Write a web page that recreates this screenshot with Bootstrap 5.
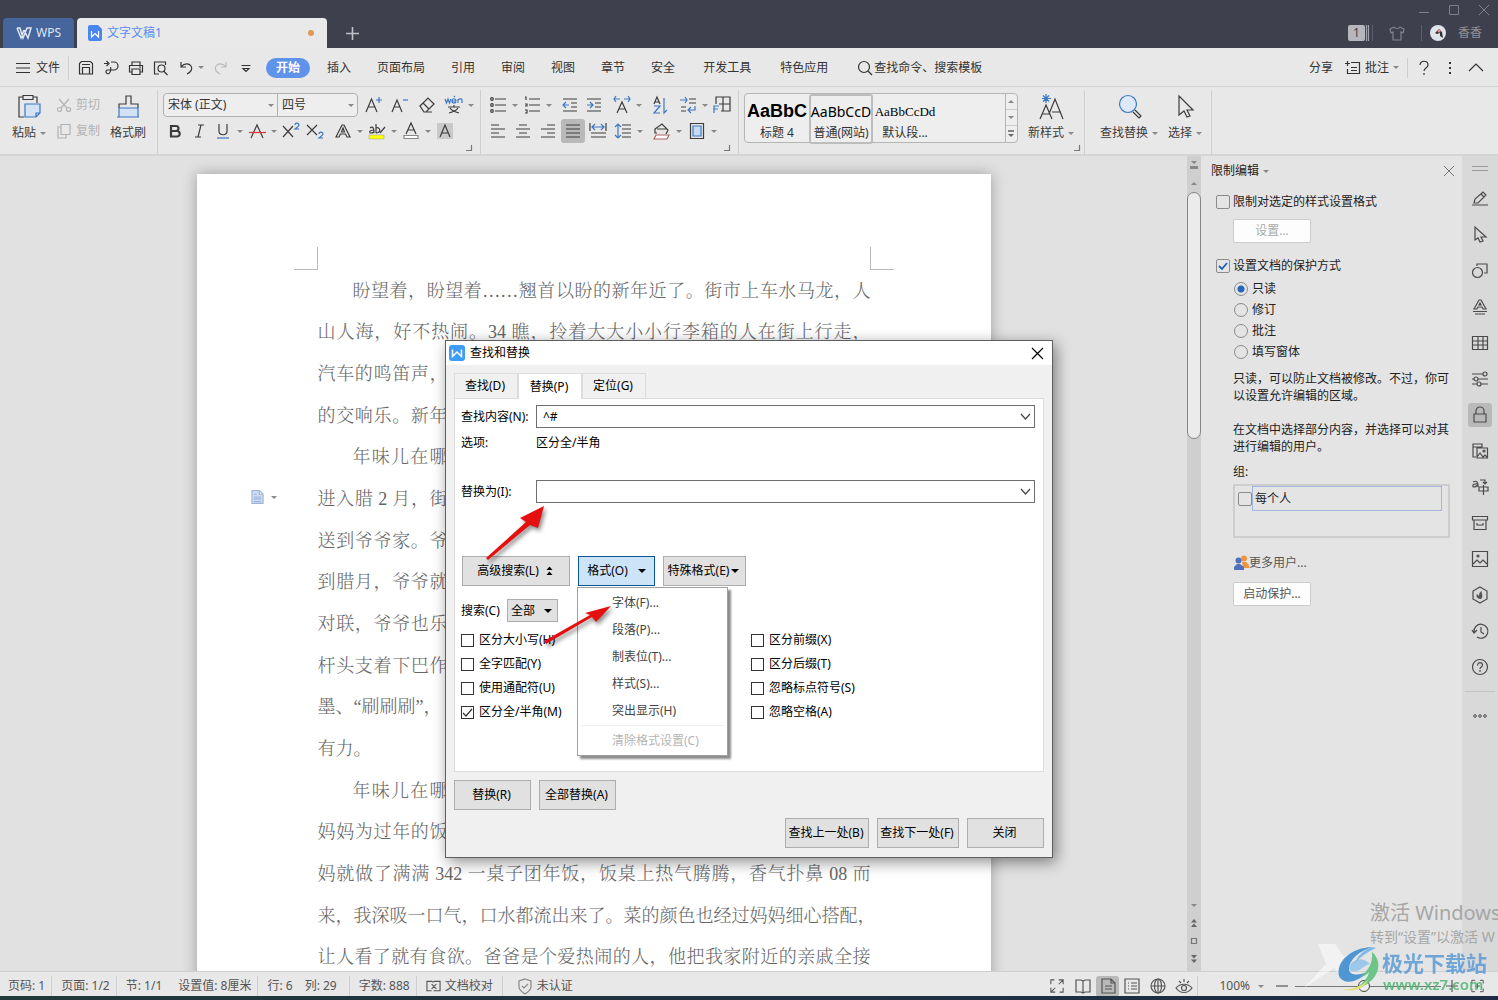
<!DOCTYPE html>
<html lang="zh-CN">
<head>
<meta charset="utf-8">
<meta name="viewport" content="width=device-width, initial-scale=1">
<title>文字文稿1 - WPS</title>
<link rel="stylesheet" href="https://cdn.jsdelivr.net/npm/bootstrap@5.3.0/dist/css/bootstrap.min.css">
<style>
body{font:12px/18px "Noto Sans","Noto Sans CJK SC",sans-serif;color:#333;background:#e8e8e8;height:100vh;overflow:hidden}
svg{fill:none;stroke:currentColor;stroke-width:1.2;width:16px;height:16px;flex:none;overflow:visible}
.thin{stroke-width:1}
.blu{stroke:#3c78c3}
.tbtn{border:0;background:none;padding:0;color:inherit;display:flex;align-items:center;justify-content:center;white-space:nowrap;text-decoration:none;flex:none}
.caret{width:0;height:0;border:3px solid transparent;border-top-color:#888;border-bottom:0;flex:none}
.caret.dark{border-width:4px 4px 0;border-top-color:#000}
.sep{width:1px;background:#cfcfcf;flex:none}
/* title bar */
.titlebar{height:48px;background:#3e414d;color:#a0a3ad}
.tabstrip{gap:3px;padding-left:3px}
.home{width:71px;height:30px;background:#46659c;color:#dfe6f3;border-radius:4px 4px 0 0;gap:4px}
.doctab{width:250px;height:30px;background:#e9e9e9;color:#5b8def;border-radius:4px 4px 0 0;padding:0 13px 0 11px;gap:5px}
.doctab svg{width:14px}
.dot{width:6px;height:6px;border-radius:50%;background:#dd9a55}
.winbtns{height:18px;gap:14px;padding-right:6px;color:#7d808b}
.account{height:30px;padding-right:16px}
.num{width:17px;height:16px;line-height:16px;background:#b5b7bc;color:#3e414d;border-radius:2px}
/* menu row */
.menurow{height:39px;border-bottom:1px solid #d2d2d2;padding:1px 14px 0}
.qat .tbtn{width:25px;height:24px}
.pill{width:44px;height:20px;border-radius:10px;background:#5f92ea;color:#fff;font-weight:700}
.mtabs{gap:26px;padding-left:17px}
/* ribbon */
.ribbon{height:69px;border-bottom:2px solid #d4d4d4;color:#3c3c3c}
.ribbon>.sep{height:64px;margin-top:3px}
.row26{height:26px;display:flex;align-items:center}
.cell{width:24px;height:24px}
.cell svg,.dd svg{width:18px;height:18px}
.dd{width:34px;height:24px;justify-content:flex-start;padding-left:3px;gap:5px}
.fontbox{border:1px solid #b0b0b0;border-radius:4px;height:24px;background:#eee;overflow:hidden}
.fontbox select{appearance:none;border:0;background:transparent url("data:image/svg+xml,%3Csvg xmlns='http://www.w3.org/2000/svg' viewBox='0 0 6 3'%3E%3Cpath d='M0 0h6L3 3z' fill='%23888'/%3E%3C/svg%3E") no-repeat right 3px center/6px 3px;padding:0 4px;color:#333;font:inherit;height:22px}
.fontbox select:first-child{width:114px;border-right:1px solid #b0b0b0}
.fontbox select:last-child{width:79px}
.big{flex-direction:column;gap:4px;height:46px}
.big svg{width:26px;height:26px}
.big .lbl{display:flex;align-items:center;gap:4px}
.dim{color:#b3b3b3;margin-top:-3px}
.on{background:#b9b9b9;border-radius:3px}
.gallery{width:274px;height:50px;border:1px solid #b5b5b5;border-radius:4px;background:#eee}
.stylei{width:64px;height:50px;flex-direction:column;color:#333;border:2px solid transparent;border-radius:3px;padding-top:1px}
.stylei span{height:26px;line-height:28px;color:#000}
.stylei.sel{border-color:#bdbdbd}
.stylei .s1{font:bold 18px/26px "Liberation Sans",sans-serif}
.stylei .s2{font-size:14px}
.stylei .s3{font:13px/28px "Liberation Serif",serif}
.galbtn{width:12px;border-left:1px solid #b5b5b5}
.galbtn .tbtn{height:16px;border-bottom:1px solid #ccc}
.up{transform:rotate(180deg)}
.corner{color:#777;align-self:flex-end;margin:0 0 3px -10px}
.corner svg{width:6px;height:6px;display:block}
/* workspace */
.deskarea{background:#e1e1e1;overflow:hidden}
.sheet{width:794px;margin-top:18px;padding:73px 97px 0;background:#fff;box-shadow:0 0 14px rgba(0,0,0,.3);height:900px}
.mark-c{width:24px;height:23px;border:0 solid #b9b9b9;border-bottom-width:1px}
.mark-c.lft{border-right-width:1px}
.mark-c.rgt{border-left-width:1px}
.manus{padding:0 23px 0 24px;height:708px;display:grid;grid-template-columns:minmax(0,1fr);grid-auto-rows:1fr;align-items:center;font:300 18px/24px "Liberation Serif","Noto Serif CJK SC","Noto Sans CJK SC",serif;color:#666;white-space:nowrap}
.manus p{margin:0;text-align:justify;text-align-last:justify}
.manus .part{width:130px}
.manus .ind{padding-left:35px}
.manus .tail{text-align-last:left}
.opts{left:54px;top:315px;gap:7px;color:#9bb3d9}
.vscroll{width:14px;background:#cfcfcf;color:#777}
.thumb{height:247px;border:1px solid #868686;border-radius:7px;background:#ebebeb}
.vscroll .tbtn{height:18px}
.pane{width:261px;background:#e4e4e4;padding:6px 12px 0 10px;color:#222}
.pane label{display:flex;align-items:center;gap:3px}
.pane input{appearance:none;width:14px;height:14px;border:1px solid #8b8b8b;margin:0;background:transparent center/10px no-repeat;border-radius:2px;flex:none}
.pane input[type=checkbox]:checked{background-image:url("data:image/svg+xml,%3Csvg xmlns='http://www.w3.org/2000/svg' viewBox='0 0 10 10'%3E%3Cpath d='M1 5l3 3 5-6' fill='none' stroke='%231f5fb4' stroke-width='1.8'/%3E%3C/svg%3E")}
.pane input[type=radio]{border-radius:50%}
.pane input[type=radio]:checked{background:radial-gradient(circle,#2465bd 0 3px,transparent 4px)}
.pane .radios label{height:21px;gap:4px}
.pbtn{width:78px;height:24px;background:#fdfdfd;border:1px solid #ccc;border-radius:2px;color:#555}
.inset{padding-left:22px}
.pane p{line-height:17px;margin:0 0 17px}
.users{height:54px;border:2px solid #cdcdcd;padding:0 3px;margin-top:3px}
.users .who{border:1px solid #a0b6de;width:190px;height:25px;line-height:23px;padding-left:2px}
.rail{width:36px;background:#d9d9d9;color:#4a4a4a}
.rail .tbtn{width:24px;height:24px;margin-bottom:12px}
/* status */
.status{height:25px;border-top:1px solid #cfcfcf;color:#555;padding:4px 0 0 8px}
.status .sep{height:20px;margin:0 9px}
.status .tbtn{width:26px;height:21px}
.status .tbtn.on{width:23px}
.strip{height:4px;background:linear-gradient(90deg,#22383c,#1d2b44)}
.zoomr{appearance:none;width:146px;height:14px;background:linear-gradient(#777,#777) center/100% 1px no-repeat;margin:0 3px}
.zoomr::-webkit-slider-thumb{appearance:none;width:12px;height:12px;border:1px solid #444;border-radius:50%;background:#eee}
/* dialog */
.dlg{left:445px;top:340px;width:608px;height:518px;background:#f0f0f0;border:1px solid #5e5e5e;color:#000;box-shadow:3px 4px 14px rgba(0,0,0,.45)}
.dlg-t{height:24px;background:#fff;padding:0 9px 0 3px;gap:5px}
.dtabs{padding:8px 8px 0;align-items:flex-end}
.dtabs button{width:64px;height:25px;border:1px solid #dcdcdc;border-bottom:0;background:#f0f0f0;padding:0 6px 0 4px}
.dtabs .cur{height:26px;background:#fff;margin-bottom:-1px;z-index:1;position:relative}
.dbody{margin:0 8px;height:374px;width:590px;border:1px solid #dcdcdc;background:#fff;padding:6px}
.fld{display:flex;align-items:center}
.fld>label{width:75px}
.combo{height:23px;border:1px solid #6f6f6f;display:flex;align-items:center;width:499px;background:#fff}
.combo input{border:0;outline:0;flex:1;padding:0 6px;height:20px;font:inherit;min-width:0}
.combo .tbtn{width:17px;height:20px;color:#444}
.combo svg{width:9px;height:6px}
.dbtn{border:1px solid #adadad;background:#e1e1e1;height:30px;width:77px;display:flex;align-items:center;justify-content:center;gap:7px;padding:0 2px 0 0;color:#000;white-space:nowrap}
.dbtn.hot{background:#cce4f7;border:1px solid #0a5596;gap:10px;padding:0}
.seldir{appearance:none;border:1px solid #adadad;width:51px;height:23px;color:#000;font:inherit;padding:0 3px;background:#e1e1e1 url("data:image/svg+xml,%3Csvg xmlns='http://www.w3.org/2000/svg' viewBox='0 0 8 4'%3E%3Cpath d='M0 0h8L4 4z'/%3E%3C/svg%3E") no-repeat right 5px center/8px 4px}
.chk label{display:flex;align-items:center;gap:5px;height:24px}
.chk input{appearance:none;margin:0;width:13px;height:13px;border:1px solid #333;background:#fff center/11px no-repeat}
.chk input:checked{background-image:url("data:image/svg+xml,%3Csvg xmlns='http://www.w3.org/2000/svg' viewBox='0 0 11 11'%3E%3Cpath d='M1 6l3 3 6-7' fill='none' stroke='%23333' stroke-width='1.2'/%3E%3C/svg%3E")}
.popm{left:131px;top:246px;width:151px;height:169px;background:#fff;border:1px solid #a0a0a0;box-shadow:3px 3px 2px rgba(0,0,0,.45);padding:1px 0 0;color:#444}
.popm button{display:block;border:0;background:none;color:inherit;padding:0 0 0 34px;height:27px;text-align:left;width:100%}
.popm hr{margin:1px 3px;border-color:#bbb}
.popm .off{color:#b5b5b5}
.arrows{left:0;top:0;width:300px;height:400px;fill:#e60f0f;stroke:none;pointer-events:none;filter:drop-shadow(2px 3px 2px rgba(0,0,0,.45))}
/* overlays */
.activ{left:1370px;right:0;top:898px;overflow:hidden;white-space:nowrap;color:#a6a6a6}
.activ .l1{font-size:20px;line-height:30px}
.activ .l2{font-size:14px;line-height:18px}
.brand{left:1300px;top:938px;width:198px;height:56px;pointer-events:none}
.brand svg{width:198px;height:56px;stroke:none}
.bname{left:82px;top:12px;font:bold 21px/24px "Noto Sans CJK SC",sans-serif;color:#5b9bd5;opacity:.85}
.burl{left:83px;top:38px;font:600 15px/16px "Noto Sans",sans-serif;color:#4fb573;opacity:.85}
</style>
<script src="https://cdn.jsdelivr.net/npm/bootstrap@5.3.0/dist/js/bootstrap.bundle.min.js"></script>
</head>
<body class="d-flex flex-column position-relative">

<header class="titlebar d-flex justify-content-between flex-shrink-0">
  <div class="tabstrip d-flex align-items-end">
    <button class="tbtn home"><svg viewBox="0 0 16 16"><path stroke-width="1.500" d="M1 3h3l3 10 4-10h4L12 13 8 5M1 3l4 10 3-8"/></svg>WPS</button>
    <div class="doctab d-flex align-items-center"><svg viewBox="0 0 14 16"><path d="M2 0h8l4 4v10a2 2 0 0 1-2 2H2a2 2 0 0 1-2-2V2a2 2 0 0 1 2-2z" fill="#4a86f0" stroke="none"/><path d="M3.500 6v6l3.500-3.500 3.500 3.500V6" stroke="#fff"/></svg><span class="flex-fill">文字文稿1</span><span class="dot"></span></div>
    <button class="tbtn ms-3 mb-2" aria-label="新建"><svg style="width:13px;height:13px" viewBox="0 0 12 12"><path d="M6 0v12M0 6h12" stroke="#c0c2c9" stroke-width="1.500"/></svg></button>
  </div>
  <div>
    <div class="winbtns d-flex justify-content-end align-items-center">
      <svg class="thin" viewBox="0 0 16 16"><path d="M3 11.500h10"/></svg><svg class="thin" viewBox="0 0 16 16"><path d="M3.500 4.500h9v9h-9z"/></svg><svg class="thin" viewBox="0 0 16 16"><path d="M3 4l10 10M13 4L3 14"/></svg>
    </div>
    <div class="account d-flex align-items-center">
      <span class="num text-center">1</span><svg style="width:7px" viewBox="0 0 7 16"><path d="M1.500 0v16M3.500 0v16"/></svg><span class="sep" style="height:16px;background:#5d606b"></span>
      <svg class="mx-3" viewBox="0 0 16 16"><path d="M5 2L1 4l1 4 2-1v8h8V7l2 1 1-4-4-2c-1 2-5 2-6 0z" stroke="#82858f"/></svg>
      <span class="sep me-2" style="height:16px;background:#5d606b"></span>
      <svg viewBox="0 0 16 16"><circle cx="8" cy="8" r="8" fill="#dfe3ea" stroke="none"/><path d="M5 8l4-4 3 3 1 6-3-2V8L7 9z" fill="#333" stroke="none"/><circle cx="9" cy="6" r="1.500" fill="#e88" stroke="none"/></svg>
      <span class="ms-2 ps-1" style="color:#8e919b">香香</span>
    </div>
  </div>
</header>

<nav class="menurow d-flex align-items-center flex-shrink-0">
  <button class="tbtn gap-1"><svg style="width:18px" viewBox="0 0 18 16"><path d="M2 3.500h14M2 8h14M2 12.500h14"/></svg>文件</button>
  <span class="sep ms-2 me-1" style="height:24px"></span>
  <div class="qat d-flex">
    <button class="tbtn" aria-label="保存"><svg viewBox="0 0 16 16"><path d="M1.500 3.500L3.500 1.500h9l2 2V14h-13V3.500zM4.500 14V7.500h7V14M4 4.500h8"/></svg></button>
    <button class="tbtn" aria-label="输出"><svg viewBox="0 0 16 16"><path d="M1 3.500h4M3.500 1l2.500 2.500L3.500 6M8 2h3a4 4 0 0 1 0 8H4a2 2 0 1 0 2 3.500c2-1.500 2-5 1.500-6.500"/></svg></button>
    <button class="tbtn" aria-label="打印"><svg viewBox="0 0 16 16"><path d="M4 5V2h8v3M4 12H1.500V5.500h13V12H12M4 9h8v5.500H4zM11 7h2"/></svg></button>
    <button class="tbtn" aria-label="预览"><svg viewBox="0 0 16 16"><path d="M6 14H1.500V2h11v3M10.500 11l4 4"/><circle cx="8.500" cy="8.500" r="3.500"/></svg></button>
    <button class="tbtn" aria-label="撤销"><svg viewBox="0 0 16 16"><path d="M3 2v5h5M3 7c3-4 8-4 10-1s0 6-4 8"/></svg></button>
    <span class="caret align-self-center"></span>
    <button class="tbtn ms-1" aria-label="恢复"><svg viewBox="0 0 16 16"><path d="M13 2v5H8M13 7C10 3 5 3 3 6s0 6 4 8" stroke="#bbb"/></svg></button>
    <button class="tbtn" aria-label="自定义"><svg viewBox="0 0 16 16"><path d="M3.500 5.500h9M5 8.500l3 3 3-3z"/></svg></button>
  </div>
  <button class="tbtn pill ms-2">开始</button>
  <div class="mtabs d-flex">
    <a class="tbtn" href="#">插入</a><a class="tbtn" href="#">页面布局</a><a class="tbtn" href="#">引用</a><a class="tbtn" href="#">审阅</a><a class="tbtn" href="#">视图</a><a class="tbtn" href="#">章节</a><a class="tbtn" href="#">安全</a><a class="tbtn" style="padding-left:2px" href="#">开发工具</a><a class="tbtn" style="padding-left:3px" href="#">特色应用</a>
    <button class="tbtn ps-1"><svg viewBox="0 0 16 16"><circle cx="6" cy="7" r="5.500"/><path d="M10 11l4 4"/></svg>查找命令、搜索模板</button>
  </div>
  <div class="ms-auto d-flex align-items-center">
    <button class="tbtn me-2">分享</button>
    <button class="tbtn"><svg class="mx-1" viewBox="0 0 16 16"><path d="M6 2.500h8.500v11h-12V9M0 3.500h5M2.500 1v5M6 7.500h6M6 10.500h6"/></svg>批注<span class="caret ms-1"></span></button>
    <span class="sep ms-2 me-2" style="height:20px"></span>
    <button class="tbtn" aria-label="帮助"><svg viewBox="0 0 16 16"><path d="M4 5c0-5 8-5 8 0 0 3-4 3-4 6M8 13v2"/></svg></button>
    <button class="tbtn mx-2 px-1" aria-label="更多"><svg style="width:12px" viewBox="0 0 12 16"><path d="M6 2v2M6 7v2M6 12v2" stroke-width="2"/></svg></button>
    <button class="tbtn" aria-label="收起"><svg viewBox="0 0 16 16"><path d="M1 11l7-7 7 7"/></svg></button>
  </div>
</nav>

<section class="ribbon d-flex flex-shrink-0">
  <div class="d-flex pt-2" style="width:157px;padding-left:10px">
    <button class="tbtn big" style="width:38px"><svg viewBox="0 0 26 26"><path d="M7 3H3v20h5M17 3h4v6M7 1.500h10v4H7z"/><path class="blu" fill="#d3e3f5" d="M9 10h15v9l-4 4H9zM20 23v-4h4"/></svg><span class="lbl">粘贴<span class="caret"></span></span></button>
    <div class="dim ps-2">
      <button class="tbtn row26 gap-1"><svg viewBox="0 0 16 16"><circle cx="3.500" cy="12.500" r="2"/><circle cx="12.500" cy="12.500" r="2"/><path d="M3 2l8 9M13 2l-8 9"/></svg>剪切</button>
      <button class="tbtn row26 gap-1"><svg viewBox="0 0 16 16"><path d="M5 1.500h9v10H5zM5 4H2v11h8v-3.500"/></svg>复制</button>
    </div>
    <button class="tbtn big" style="margin-left:10px"><svg viewBox="0 0 26 26"><path d="M4 14v-4h7V2h5v8h7v4"/><path class="blu" fill="#d3e3f5" d="M4 14h19v9H4zM2 23h22"/></svg><span class="lbl">格式刷</span></button>
  </div>
  <span class="sep"></span>
  <div style="width:322px;padding:5px 0 0 5px" class="d-flex">
    <div>
      <div class="row26" style="gap:3px">
        <div class="fontbox d-flex"><select aria-label="字体"><option>宋体 (正文)</option></select><select aria-label="字号"><option>四号</option></select></div>
        <button class="tbtn cell" aria-label="增大字号"><svg viewBox="0 0 18 18"><path d="M2 16L7.500 3 13 16M4 11h7"/><path class="blu" d="M15 1v6M12 4h6"/></svg></button>
        <button class="tbtn cell" aria-label="减小字号"><svg viewBox="0 0 18 18"><path d="M1 16L6 4l5 12M3 11h6"/><path class="blu" d="M12 4h5"/></svg></button>
        <button class="tbtn cell" aria-label="清除格式"><svg viewBox="0 0 18 18"><path d="M2 10l8-8 6 6-8 8H6zM5 7l6 6M8 16h6"/></svg></button>
        <button class="tbtn dd" aria-label="拼音"><svg viewBox="0 0 18 18"><path class="blu" d="M0 3l1.500 4L3 3l1.500 4L6 3M7 5h4c0-3-4-3-4 0s3 2 4 1M9 1l1-1M13 7V3M13 4c2-2 4-1 4 0v3"/><path d="M3 11h12M9 9v2M5 12c2 3 5 4 9 5M13 12c-2 3-5 4-9 5"/></svg><span class="caret"></span></button>
      </div>
      <div class="row26">
        <button class="tbtn cell" aria-label="加粗"><svg viewBox="0 0 18 18"><path stroke-width="2.200" d="M5 4h5a2.500 2.500 0 0 1 0 5H5zM5 9h6a2.500 2.500 0 0 1 0 5.500H5z"/></svg></button>
        <button class="tbtn cell" aria-label="倾斜"><svg viewBox="0 0 18 18"><path d="M8 3h6M5 15h6M11 3L8 15"/></svg></button>
        <button class="tbtn dd" aria-label="下划线"><svg viewBox="0 0 18 18"><path d="M5 2v7c0 5 8 5 8 0V2"/><path class="blu" d="M3 16h12"/></svg><span class="caret"></span></button>
        <button class="tbtn dd" aria-label="删除线"><svg viewBox="0 0 18 18"><path d="M3 16L9 3l6 13"/><path stroke="#d33" d="M1 10.500h17"/></svg><span class="caret"></span></button>
        <button class="tbtn cell" aria-label="上标"><svg viewBox="0 0 18 18"><path d="M1 4l10 11M11 4L1 15"/><path class="blu" d="M13 3c0-3 4-2 4 0 0 1-4 4-4 4h4"/></svg></button>
        <button class="tbtn cell" aria-label="下标"><svg viewBox="0 0 18 18"><path d="M1 3l10 10M11 3L1 13"/><path class="blu" d="M13 12c0-3 4-2 4 0 0 1-4 4-4 4h4"/></svg></button>
        <button class="tbtn dd ms-1" aria-label="文字效果"><svg viewBox="0 0 18 18"><path d="M2 15L8 3h2l6 12h-3l-1.500-3h-5L5 15zM7.500 10L9 6l1.500 4z"/></svg><span class="caret"></span></button>
        <button class="tbtn dd" aria-label="突出显示"><svg viewBox="0 0 18 18"><path d="M2 6c3-2 4 0 4 5M6 8c-5 0-5 3-3 3s3-1 3-1M8 2v9M8 6c4-2 6 5 0 5M17 5l-5 6"/><path stroke="#999" fill="#ff0" stroke-width=".5" d="M1 13h15v4H1z"/></svg><span class="caret"></span></button>
        <button class="tbtn dd" aria-label="字体颜色"><svg viewBox="0 0 18 18"><path d="M4 12L9 1l5 11M6 8h6"/><path stroke="#888" fill="#fff" d="M2 13.500h14v3H2z"/></svg><span class="caret"></span></button>
        <button class="tbtn cell" aria-label="字符底纹"><svg viewBox="0 0 18 18"><path fill="#c9c9c9" stroke="none" d="M1 1h16v16H1z"/><path d="M4 15L9 3l5 12M6 11h6"/></svg></button>
      </div>
    </div>
    <span class="corner"><svg viewBox="0 0 6 6"><path d="M5.500 0v5.500H0"/></svg></span>
  </div>
  <span class="sep"></span>
  <div style="width:257px;padding:5px 0 0 5px" class="d-flex">
    <div>
      <div class="row26">
        <button class="tbtn dd" aria-label="项目符号"><svg viewBox="0 0 18 18"><circle cx="3" cy="3" r="1.300"/><circle cx="3" cy="9" r="1.300"/><circle cx="3" cy="15" r="1.300"/><path d="M6 3h11M6 9h11M6 15h11"/></svg><span class="caret"></span></button>
        <button class="tbtn dd" aria-label="编号"><svg viewBox="0 0 18 18"><path d="M2 1h1v3M2 8h2v2H2M2 14h2v3H2M6 3h11M6 9h11M6 15h11"/></svg><span class="caret"></span></button>
        <button class="tbtn cell ms-1" aria-label="减少缩进"><svg viewBox="0 0 18 18"><path d="M2 3h14M10 7h6M10 11h6M2 15h14"/><path class="blu" d="M8 9H2M5 6L2 9l3 3"/></svg></button>
        <button class="tbtn cell" aria-label="增加缩进"><svg viewBox="0 0 18 18"><path d="M2 3h14M10 7h6M10 11h6M2 15h14"/><path class="blu" d="M2 9h6M5 6l3 3-3 3"/></svg></button>
        <button class="tbtn dd ms-1" aria-label="中文版式"><svg viewBox="0 0 18 18"><path d="M4 17L9 6l5 11M6 13h6"/><path class="blu" d="M1 3h6M3 0L1 3l2 3M11 3h6M15 0l2 3-2 3"/></svg><span class="caret"></span></button>
        <button class="tbtn cell ms-1" aria-label="排序"><svg viewBox="0 0 18 18"><path d="M3 8l3-7 3 7M4 6h4"/><path class="blu" d="M3 10h6l-6 7h6M13 2v15l3-3"/></svg></button>
        <button class="tbtn dd ms-1" aria-label="换行"><svg viewBox="0 0 18 18"><path d="M10 3h7M10 7h7M2 11h5M2 15h5"/><path class="blu" d="M1 4h7M6 1l2 3-2 3M16 10v4h-6M12 11l-3 3 3 3"/></svg><span class="caret"></span></button>
        <button class="tbtn cell" aria-label="制表位"><svg viewBox="0 0 18 18"><path d="M3 8V1h14v14H8M10 1v14M6 8h11"/><path class="blu" d="M1 17v-7h5M1 13h4"/></svg></button>
      </div>
      <div class="row26" style="gap:1px">
        <button class="tbtn cell" aria-label="左对齐"><svg viewBox="0 0 18 18"><path d="M2 3h8M2 7h14M2 11h8M2 15h14"/></svg></button>
        <button class="tbtn cell" aria-label="居中"><svg viewBox="0 0 18 18"><path d="M5 3h8M2 7h14M5 11h8M2 15h14"/></svg></button>
        <button class="tbtn cell" aria-label="右对齐"><svg viewBox="0 0 18 18"><path d="M8 3h8M2 7h14M8 11h8M2 15h14"/></svg></button>
        <button class="tbtn cell on" aria-label="两端对齐"><svg viewBox="0 0 18 18"><path d="M2 3h14M2 7h14M2 11h14M2 15h14"/></svg></button>
        <button class="tbtn cell" aria-label="分散对齐"><svg viewBox="0 0 18 18"><path d="M1 1v8M17 1v8M2 11h15M2 15h15"/><path class="blu" d="M3 5h12M6 2L3 5l3 3M12 2l3 3-3 3"/></svg></button>
        <button class="tbtn dd" aria-label="行距"><svg viewBox="0 0 18 18"><path d="M8 3h9M8 7h9M8 11h9M8 15h9"/><path class="blu" d="M4 2v14M1 5l3-3 3 3M1 13l3 3 3-3"/></svg><span class="caret"></span></button>
        <button class="tbtn dd ms-1" aria-label="底纹"><svg viewBox="0 0 18 18"><path d="M4 11H2V7l7-5 6 6-2 4M4 7h10"/><path stroke="#a66" fill="#fff" d="M3 13h13l-2 4H1z"/></svg><span class="caret"></span></button>
        <button class="tbtn dd" aria-label="边框"><svg viewBox="0 0 18 18"><path d="M2.500 1.500h13v15h-13z"/><path class="blu" fill="#c9dcf5" d="M5 4h8v10H5z"/></svg><span class="caret"></span></button>
      </div>
    </div>
    <span class="corner"><svg viewBox="0 0 6 6"><path d="M5.500 0v5.500H0"/></svg></span>
  </div>
  <span class="sep"></span>
  <div class="d-flex" style="width:345px;padding:6px 0 0 5px">
    <div class="gallery d-flex">
      <button class="tbtn stylei"><span class="s1">AaBbC</span>标题 4</button>
      <button class="tbtn stylei sel"><span class="s2">AaBbCcD</span>普通(网站)</button>
      <button class="tbtn stylei"><span class="s3">AaBbCcDd</span>默认段...</button>
      <div class="galbtn d-flex flex-column ms-auto"><button class="tbtn" aria-label="上"><span class="caret up"></span></button><button class="tbtn" aria-label="下"><span class="caret"></span></button><button class="tbtn border-0" aria-label="展开"><svg style="width:6px;height:8px" viewBox="0 0 6 8"><path d="M0 1h6"/><path d="M0 4h6L3 7z" fill="#666" stroke="none"/></svg></button></div>
    </div>
    <button class="tbtn big ms-2 pt-1" style="padding-left:2px"><svg viewBox="0 0 26 26"><path d="M2 25l6-14 6 14M4 20h8M11 20l6-15 8 20M14 18h9"/><path class="blu" d="M8 0v9M4 4.500h9M5 1.500l6 6M11 1.500l-6 6"/></svg><span class="lbl">新样式<span class="caret"></span></span></button>
    <span class="corner ms-auto me-1"><svg viewBox="0 0 6 6"><path d="M5.500 0v5.500H0"/></svg></span>
  </div>
  <span class="sep"></span>
  <div class="d-flex pt-2" style="width:126px;padding-left:15px;gap:10px">
    <button class="tbtn big"><svg viewBox="0 0 26 26"><path d="M17 18l6 6 2-2-6-6"/><circle class="blu" cx="12" cy="10" r="8.500" fill="#dbe9f8"/></svg><span class="lbl">查找替换<span class="caret"></span></span></button>
    <button class="tbtn big"><svg viewBox="0 0 26 26"><path d="M7 2v19l5-4 3 6 3-1-3-6h6z"/></svg><span class="lbl">选择<span class="caret"></span></span></button>
  </div>
  <span class="sep"></span>
</section>

<main class="d-flex flex-fill" style="min-height:0">
  <div class="deskarea flex-fill d-flex justify-content-center align-items-start">
    <article class="sheet position-relative">
      <div class="d-flex justify-content-between"><span class="mark-c lft"></span><span class="mark-c rgt"></span></div>
      <div class="manus">
        <p class="ind">盼望着，盼望着……翘首以盼的新年近了。街市上车水马龙，人</p>
        <p>山人海，好不热闹。34 瞧，拎着大大小小行李箱的人在街上行走，</p>
        <p class="part">汽车的鸣笛声，</p>
        <p class="part">的交响乐。新年</p>
        <p class="part ind">年味儿在哪</p>
        <p class="part">进入腊 2 月，街</p>
        <p class="part">送到爷爷家。爷</p>
        <p class="part">到腊月，爷爷就</p>
        <p class="part">对联，爷爷也乐</p>
        <p class="part">杆头支着下巴作</p>
        <p class="part tail">墨、“刷刷刷”，</p>
        <p class="tail">有力。</p>
        <p class="part ind">年味儿在哪</p>
        <p class="part">妈妈为过年的饭</p>
        <p>妈就做了满满 342 一桌子团年饭，饭桌上热气腾腾，香气扑鼻 08 而</p>
        <p>来，我深吸一口气，口水都流出来了。菜的颜色也经过妈妈细心搭配，</p>
        <p>让人看了就有食欲。爸爸是个爱热闹的人，他把我家附近的亲戚全接</p>
      </div>
      <button class="tbtn opts position-absolute" aria-label="粘贴选项"><svg viewBox="0 0 14 16" style="width:13px"><path d="M1 1h8l4 4v10H1zM9 1v4h4M3 5h3M3 8h8M3 10h8M3 13h8" fill="#cfdcf1"/></svg><span class="caret"></span></button>
    </article>
  </div>
  <div class="vscroll d-flex flex-column">
    <button class="tbtn" aria-label="标尺"><svg style="width:8px;height:10px" viewBox="0 0 8 10"><path d="M1 1h6L4 4zM0 6h8v3H0z" fill="#888" stroke="none"/></svg></button>
    <button class="tbtn" aria-label="上滚"><span class="caret up"></span></button>
    <div class="thumb"></div>
    <button class="tbtn mt-auto" aria-label="下滚"><span class="caret"></span></button>
    <button class="tbtn" aria-label="上一页"><svg style="width:6px;height:8px" viewBox="0 0 6 8"><path d="M0 3.500L3 0l3 3.500zM0 8l3-3.500L6 8z" fill="#666" stroke="none"/></svg></button>
    <button class="tbtn" aria-label="选择浏览对象"><svg style="width:6px;height:6px" viewBox="0 0 6 6"><path d="M.5.500h5v5h-5z"/></svg></button>
    <button class="tbtn" style="margin-bottom:3px" aria-label="下一页"><svg style="width:6px;height:8px" viewBox="0 0 6 8"><path d="M0 0h6L3 3.500zM0 4.500h6L3 8z" fill="#666" stroke="none"/></svg></button>
  </div>
  <aside class="pane flex-shrink-0">
    <div class="d-flex align-items-center gap-1" style="margin-right:-4px"><span>限制编辑</span><span class="caret"></span><button class="tbtn ms-auto" aria-label="关闭"><svg class="thin" style="width:10px;height:10px" viewBox="0 0 10 10"><path d="M0 0l10 10M10 0L0 10" stroke="#777"/></svg></button></div>
    <div style="padding:13px 0 0 5px">
      <label><input type="checkbox">限制对选定的样式设置格式</label>
      <div style="padding:8px 0 14px 17px"><button class="pbtn" style="color:#aaa" disabled>设置...</button></div>
      <label><input type="checkbox" checked>设置文档的保护方式</label>
      <div class="radios" style="padding:3px 0 8px 18px">
        <label><input type="radio" name="m" checked>只读</label><label><input type="radio" name="m">修订</label><label><input type="radio" name="m">批注</label><label><input type="radio" name="m">填写窗体</label>
      </div>
    </div>
    <div class="inset">
      <p>只读，可以防止文档被修改。不过，你可<br>以设置允许编辑的区域。</p>
      <p class="mb-2">在文档中选择部分内容，并选择可以对其<br>进行编辑的用户。</p>
      <div>组:</div>
      <div class="users"><label class="gap-0"><input type="checkbox"><span class="who">每个人</span></label></div>
      <a href="#" class="tbtn justify-content-start" style="color:#555;margin-top:16px"><svg viewBox="0 0 16 16"><g stroke="none"><circle cx="11" cy="3.500" r="3" fill="#ee9540"/><path d="M9 7h4l3 3v3h-6z" fill="#ee9540"/><circle cx="5.500" cy="5.500" r="3" fill="#4f6fc0"/><path d="M1 15v-3l3-3h3l4 3v3z" fill="#4f6fc0"/></g></svg>更多用户...</a>
      <button class="pbtn" style="margin-top:10px">启动保护...</button>
    </div>
  </aside>
  <aside class="rail d-flex flex-column align-items-center flex-shrink-0">
    <svg class="thin" style="height:31px" viewBox="0 0 16 31"><path d="M0 10.500h16M0 14.500h16" stroke="#999"/></svg>
    <button class="tbtn" aria-label="样式"><svg viewBox="0 0 16 16"><path d="M0 14h16M2 12l1-4 8-7 3 3-8 8zM9 3l3 3"/></svg></button>
    <button class="tbtn" aria-label="选择"><svg viewBox="0 0 16 16"><path d="M3 0v13l3-2 2 4 3-1-2-4h5z"/></svg></button>
    <button class="tbtn" aria-label="形状"><svg viewBox="0 0 16 16"><circle cx="5.500" cy="9.500" r="5"/><path d="M5 3V1h10v9h-3"/></svg></button>
    <button class="tbtn" aria-label="艺术字"><svg viewBox="0 0 16 16"><path d="M2 10l5-9h2l5 9h-3l-1-2H6l-1 2zM7 6l1-2 1 2zM1 12.500h14M3 15h10"/></svg></button>
    <button class="tbtn" aria-label="表格"><svg viewBox="0 0 16 16"><path d="M.500 1.500h15v13H.500zM.500 6h15M.500 10h15M6 1v13M11 1v13"/></svg></button>
    <button class="tbtn" aria-label="属性"><svg viewBox="0 0 16 16"><path d="M0 3h11M0 8h2M6 8h10M0 13h5M9 13h7"/><circle cx="13" cy="3" r="2"/><circle cx="4" cy="8" r="2"/><circle cx="7" cy="13" r="2"/></svg></button>
    <button class="tbtn on" aria-label="限制编辑"><svg viewBox="0 0 16 16"><path d="M2 7h12v8H2zM4 7V4a4 4 0 0 1 8 0v3"/></svg></button>
    <button class="tbtn" aria-label="图库"><svg viewBox="0 0 16 16"><path d="M4 14H1V1h9v4M1 4h9M5 5h10.500v10H5zM5 14l3-4 3 4 2-2 2 2"/><circle cx="12" cy="8" r="1"/></svg></button>
    <button class="tbtn" aria-label="翻译"><svg viewBox="0 0 16 16"><path d="M1 3c4-2 5 0 5 5M6 5C0 4 0 8 2 8s4-2 4-2M8 1h5v4M11 3l2 2 2-2M7 8h9v4H7zM11.500 6v10"/></svg></button>
    <button class="tbtn" aria-label="备份"><svg viewBox="0 0 16 16"><path d="M.500 1.500h15V5H.500zM2 5v9.500h12V5M5 8v2h6V8"/></svg></button>
    <button class="tbtn" aria-label="图片"><svg viewBox="0 0 16 16"><path d="M.500.500h15v15H.500zM1 13l4-4 3 3 3-3 4 4"/><circle cx="6" cy="5" r="1"/></svg></button>
    <button class="tbtn" aria-label="云"><svg viewBox="0 0 16 16"><path d="M8 0l7 4v8l-7 4-7-4V4z"/><path d="M8 12c-4-1-4-4-3-5l2 2c0-3 1-4 3-5-1 3 2 5-1 8z" fill="#555" stroke="none"/></svg></button>
    <button class="tbtn" aria-label="历史"><svg viewBox="0 0 16 16"><path d="M2 9a7 7 0 1 1 3 5M0 7l2 3 3-3M9 4v5l3 2"/></svg></button>
    <button class="tbtn" aria-label="帮助"><svg viewBox="0 0 16 16"><circle cx="8" cy="8" r="7.500"/><path d="M5.500 6.500c0-4 5-3.500 5-.5 0 2-2.500 2-2.500 4M8 11v2"/></svg></button>
    <div style="height:1px;width:30px;background:#c4c4c4"></div>
    <button class="tbtn mt-2 pt-2" aria-label="更多"><svg class="thin" viewBox="0 0 16 16"><circle cx="3" cy="8" r="1.300"/><circle cx="8" cy="8" r="1.300"/><circle cx="13" cy="8" r="1.300"/></svg></button>
  </aside>
</main>

<footer class="status d-flex align-items-center flex-shrink-0">
  <span>页码: 1</span><span class="sep" style="margin-left:6px"></span><span>页面: 1/2</span><span class="sep" style="margin-left:6px"></span><span>节: 1/1</span><span class="ms-3">设置值: 8厘米</span><span class="sep" style="margin-left:6px"></span><span>行: 6</span><span class="ms-2 ps-1">列: 29</span><span class="sep" style="margin-left:12px"></span><span>字数: 888</span><span class="sep" style="margin-left:6px"></span>
  <svg class="me-1" viewBox="0 0 16 16" style="width:15px"><path d="M6 13H1V3h5l2 1M8 3h7v10H8M6 6l5 5M11 6l-5 5"/></svg><span>文档校对</span><span class="sep" style="margin-right:14px"></span>
  <svg class="me-1" viewBox="0 0 16 16"><path d="M8 1l6 2v6c0 3-3 5-6 7-3-2-6-4-6-7V3zM5 8l2 2 4-4" stroke="#888"/></svg><span>未认证</span>
  <div class="ms-auto d-flex align-items-center" style="width:454px">
    <button class="tbtn" aria-label="全屏"><svg style="width:14px" viewBox="0 0 16 16"><path d="M1 6V1h4M15 10v5h-4M10 1h5v5M15 1l-5 5M6 15H1v-5M1 15l5-5"/></svg></button>
    <button class="tbtn" aria-label="阅读"><svg viewBox="0 0 16 16"><path d="M8 3v12M8 3L6 2H1v12h5l2 1 2-1h5V2h-5z"/></svg></button>
    <button class="tbtn on" aria-label="页面"><svg viewBox="0 0 16 16"><path d="M2 1h9l4 4v10H2zM5 8h7M5 11h7M11 1v4h4"/></svg></button>
    <button class="tbtn" aria-label="大纲"><svg viewBox="0 0 16 16"><path d="M1 1h14v14H1zM4 5h1M7 5h6M4 8h1M7 8h6M4 11h1M7 11h6"/></svg></button>
    <button class="tbtn" aria-label="Web"><svg viewBox="0 0 16 16"><circle cx="8" cy="8" r="7"/><ellipse cx="8" cy="8" rx="3.500" ry="7"/><path d="M1 8h14M8 1v14"/></svg></button>
    <button class="tbtn" aria-label="护眼"><svg viewBox="0 0 16 16"><path d="M0 10c4-5 12-5 16 0-4 6-12 6-16 0zM8 1v3M3 3l2 2M13 3l-2 2"/><circle cx="8" cy="10" r="2.500"/></svg></button>
    <span class="sep mx-0"></span>
    <span class="ms-auto">100%</span><span class="caret mx-2"></span>
    <button class="tbtn" style="width:20px" aria-label="缩小"><svg style="width:12px" viewBox="0 0 12 16"><path d="M0 8h12"/></svg></button>
    <input class="zoomr" type="range" min="0" max="100" value="47" aria-label="缩放">
    <button class="tbtn" style="width:16px" aria-label="放大"><svg style="width:12px" viewBox="0 0 12 16"><path d="M0 8h12M6 2v12"/></svg></button>
    <button class="tbtn me-1" style="width:34px" aria-label="适合"><svg style="width:13px" viewBox="0 0 16 16"><path d="M1 5V1h4M11 1h4v4M15 11v4h-4M5 15H1v-4M8 5v6M5 8h6"/></svg></button>
  </div>
</footer>
<div class="strip flex-shrink-0"></div>

<section class="dlg position-absolute">
  <div class="dlg-t d-flex align-items-center"><svg viewBox="0 0 16 16"><rect width="16" height="16" rx="3" fill="#3d9cf5" stroke="none"/><path d="M3.500 4.500v7L8 7l4.500 4.500v-7" stroke="#fff" stroke-width="1.500"/></svg><span>查找和替换</span><button class="tbtn ms-auto" aria-label="关闭"><svg style="width:11px;height:11px" viewBox="0 0 11 11"><path d="M0 0l11 11M11 0L0 11"/></svg></button></div>
  <div class="dtabs d-flex"><button>查找(D)</button><button class="cur">替换(P)</button><button>定位(G)</button></div>
  <div class="dbody">
    <div class="fld"><label for="f1">查找内容(N):</label><div class="combo"><input id="f1" value="^#"><button class="tbtn" aria-label="展开"><svg viewBox="0 0 9 6"><path d="M0 0l4.500 5L9 0"/></svg></button></div></div>
    <div class="fld" style="padding:6px 0 28px"><span style="width:75px">选项:</span><span>区分全/半角</span></div>
    <div class="fld"><label for="f2">替换为(I):</label><div class="combo"><input id="f2"><button class="tbtn" aria-label="展开"><svg viewBox="0 0 9 6"><path d="M0 0l4.500 5L9 0"/></svg></button></div></div>
    <div class="d-flex gap-2" style="padding:53px 0 13px 1px"><button class="dbtn" style="width:108px">高级搜索(L)<svg style="width:7px;height:10px" viewBox="0 0 7 10"><path d="M.5 4l3-3.500 3 3.500zM.5 9l3-3.500 3 3.500z" fill="#000" stroke="none"/></svg></button><button class="dbtn hot">格式(O)<span class="caret dark"></span></button><button class="dbtn" style="width:83px;gap:2px">特殊格式(E)<span class="caret dark"></span></button></div>
    <div class="d-flex align-items-center" style="margin-bottom:6px"><label for="dir" style="width:46px">搜索(C)</label><select id="dir" class="seldir"><option>全部</option></select></div>
    <div class="d-flex chk">
      <div style="width:290px"><label><input type="checkbox">区分大小写(H)</label><label><input type="checkbox">全字匹配(Y)</label><label><input type="checkbox">使用通配符(U)</label><label><input type="checkbox" checked>区分全/半角(M)</label></div>
      <div><label><input type="checkbox">区分前缀(X)</label><label><input type="checkbox">区分后缀(T)</label><label><input type="checkbox">忽略标点符号(S)</label><label><input type="checkbox">忽略空格(A)</label></div>
    </div>
  </div>
  <div class="d-flex gap-2 px-2 pt-2"><button class="dbtn">替换(R)</button><button class="dbtn">全部替换(A)</button></div>
  <div class="d-flex gap-2 px-2 pt-2 justify-content-end"><button class="dbtn" style="width:84px">查找上一处(B)</button><button class="dbtn" style="width:82px">查找下一处(F)</button><button class="dbtn">关闭</button></div>
  <div class="popm position-absolute"><button>字体(F)...</button><button>段落(P)...</button><button>制表位(T)...</button><button>样式(S)...</button><button>突出显示(H)</button><hr><button class="off" disabled>清除格式设置(C)</button></div>
  <svg class="arrows position-absolute" viewBox="0 0 300 400"><path d="M98 165L92 187 84 184 42 219 40 217 80 181 74 177z"/><path d="M165 265L150 281 146 276 100 303 98 300 144 274 139 272z"/></svg>
</section>

<div class="activ position-absolute"><div class="l1">激活 Windows</div><div class="l2">转到“设置”以激活 W</div></div>
<div class="brand position-absolute"><svg viewBox="0 0 198 56"><path d="M18 6h17l9 13 28-13-30 18-3 12-5-6-30 20 22-24z" fill="#fff" opacity=".5"/><path d="M72 9C50 10 36 24 39 38c5 10 20 6 30-5-9 5-20 5-20-2 0-10 11-18 23-22z" fill="#4f97d3"/><path d="M56 22c-9 4-9 13 0 11 6-1 8-6 14-7-4-4-9-6-14-4z" fill="#9cc8ea"/><path d="M72 9l4 1c-9 4-16 9-21 15 2-7 9-13 17-16z" fill="#7fb9e6"/><path d="M72 14c14 12 4 34-20 38 10-5 16-12 17-18-3 4-6 4-9 5 8-6 13-13 12-25z" fill="#6cc487"/><path d="M42 51c10 1 20-3 26-9-3 8-14 13-26 9z" fill="#e0df78"/></svg><span class="bname position-absolute">极光下载站</span><span class="burl position-absolute">www.xz7.com</span></div>
</body>
</html>
